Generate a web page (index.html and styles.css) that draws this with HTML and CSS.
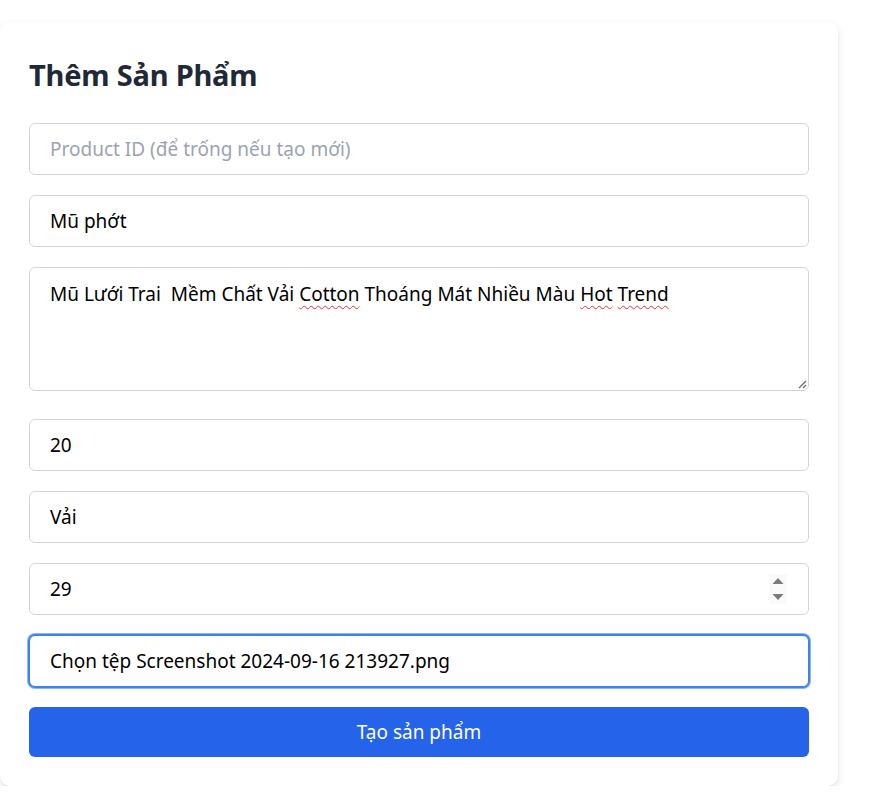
FILE: index.html
```html
<!DOCTYPE html>
<html lang="vi">
<head>
<meta charset="utf-8">
<title>Thêm Sản Phẩm</title>
<link rel="stylesheet" href="styles.css">
</head>
<body>
<div class="card">
  <h1 class="title">Thêm Sản Phẩm</h1>
  <form class="form">
    <div class="field placeholder">Product ID (để trống nếu tạo mới)</div>
    <div class="field">Mũ phớt</div>
    <div class="field area">
      <span>Mũ Lưới Trai&nbsp; Mềm Chất Vải <span class="spell">Cotton</span> Thoáng Mát Nhiều Màu <span class="spell">Hot</span> <span class="spell">Trend</span></span>
      <svg class="grip" width="9" height="9" viewBox="0 0 9 9"><path d="M8 1 L1 8 M8 5 L5 8" stroke="#6b6b6b" stroke-width="1.3" fill="none"/></svg>
    </div>
    <div class="field">20</div>
    <div class="field">Vải</div>
    <div class="field number">
      <span>29</span>
      <span class="spinner">
        <svg width="18" height="30" viewBox="0 0 18 30"><path d="M3.5 10 L9 4 L14.5 10 Z" fill="#7a7a7a"/><path d="M3.5 20 L14.5 20 L9 26 Z" fill="#7a7a7a"/></svg>
      </span>
    </div>
    <div class="field focused">Chọn tệp Screenshot 2024-09-16 213927.png</div>
    <div class="button">Tạo sản phẩm</div>
  </form>
</div>
</body>
</html>
```
FILE: styles.css
```css
html, body {
  margin: 0;
  padding: 0;
  background: #ffffff;
}
body {
  font-family: "Noto Sans", "Open Sans", sans-serif;
  color: #000;
}
.card {
  box-sizing: border-box;
  width: 838px;
  margin-top: 22px;
  padding: 29px;
  background: #fff;
  border-radius: 10px;
  box-shadow: 0 4px 10px rgba(0, 0, 0, 0.09), 0 1px 3px rgba(0, 0, 0, 0.06);
}
.title {
  margin: 0 0 24px 0;
  font-size: 29px;
  line-height: 48px;
  font-weight: 700;
  color: #1f2937;
  letter-spacing: -0.2px;
}
.form {
  display: flex;
  flex-direction: column;
  gap: 20px;
}
.field {
  box-sizing: border-box;
  height: 52px;
  padding: 0 20px;
  border: 1px solid #d1d5db;
  border-radius: 6px;
  font-size: 19px;
  line-height: 50px;
  white-space: nowrap;
  background: #fff;
}
.placeholder {
  color: #9ca3af;
}
.area {
  position: relative;
  height: 124px;
  line-height: 28px;
  padding-top: 12px;
  margin-bottom: 8px;
}
.spell {
  text-decoration: underline wavy #e53935;
  text-decoration-thickness: 1px;
  text-underline-offset: 4px;
}
.grip {
  position: absolute;
  right: 1px;
  bottom: 1px;
}
.number {
  display: flex;
  justify-content: space-between;
  align-items: center;
  padding-right: 21px;
}
.spinner {
  display: flex;
  width: 18px;
  height: 30px;
  background: #fafafa;
}
.focused {
  border-color: #3b82f6;
  box-shadow: 0 0 0 1px #3b82f6, 0 0 0 2px rgba(96, 150, 240, 0.7);
}
.button {
  height: 50px;
  border-radius: 6px;
  background: #2563eb;
  color: #fff;
  font-size: 19px;
  line-height: 50px;
  text-align: center;
}
```
